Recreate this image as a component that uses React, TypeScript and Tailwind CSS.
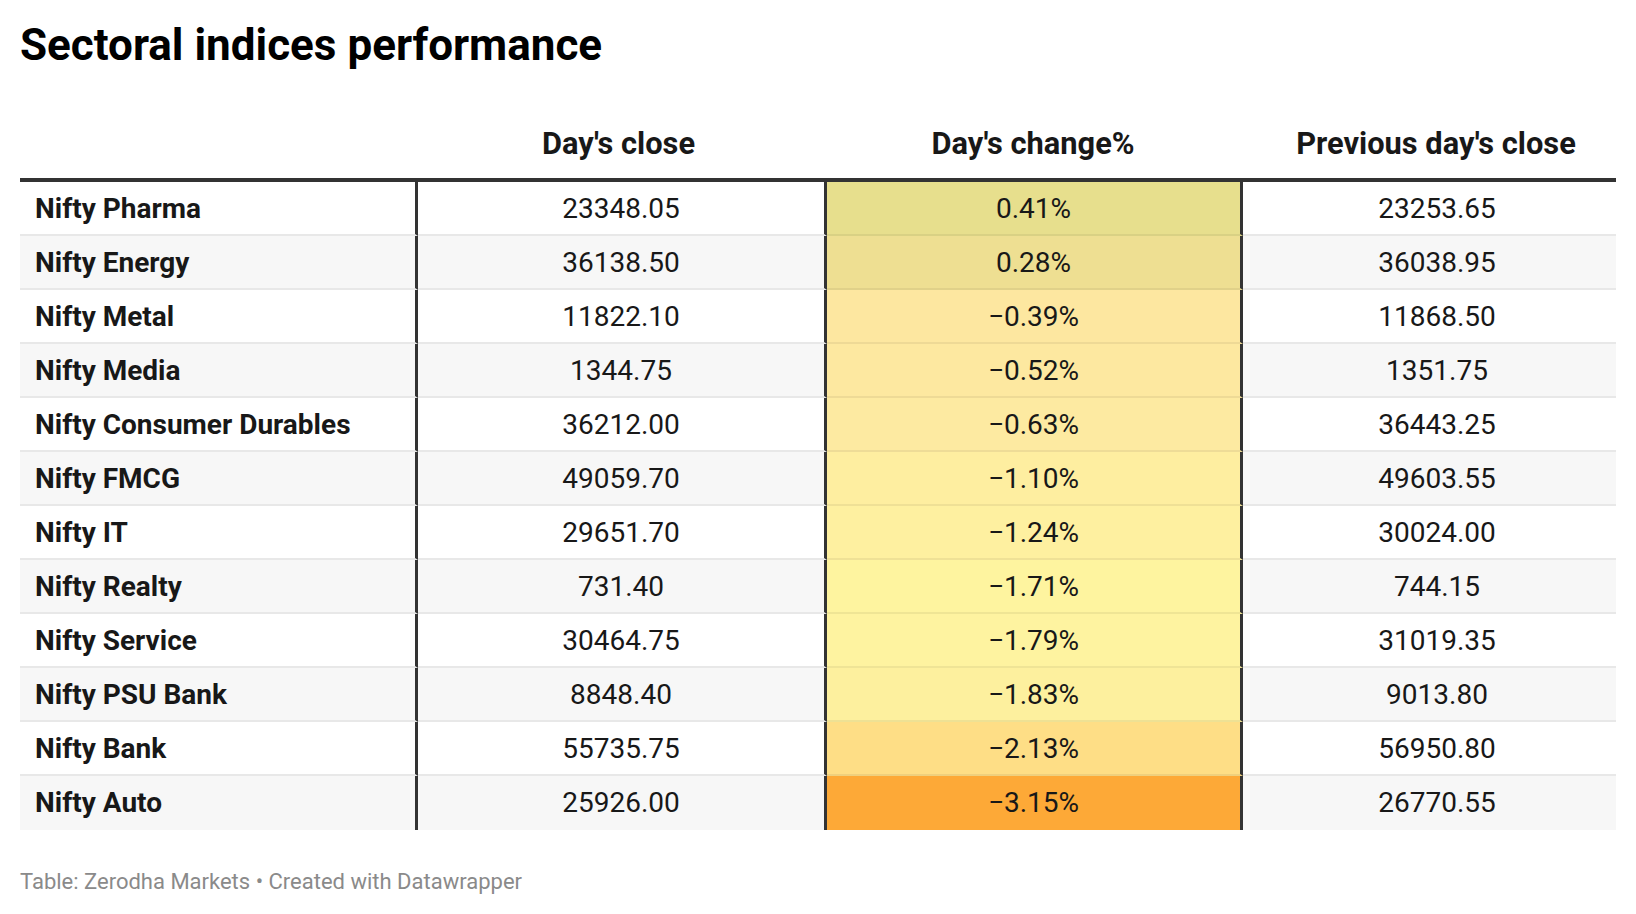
import React from "react";

type Row = { name: string; close: string; change: string; prev: string; color: string };

const rows: Row[] = [
  { name: "Nifty Pharma", close: "23348.05", change: "0.41%", prev: "23253.65", color: "#e7df8d" },
  { name: "Nifty Energy", close: "36138.50", change: "0.28%", prev: "36038.95", color: "#eedf92" },
  { name: "Nifty Metal", close: "11822.10", change: "\u22120.39%", prev: "11868.50", color: "#fde7a0" },
  { name: "Nifty Media", close: "1344.75", change: "\u22120.52%", prev: "1351.75", color: "#fde8a0" },
  { name: "Nifty Consumer Durables", close: "36212.00", change: "\u22120.63%", prev: "36443.25", color: "#fdeaa1" },
  { name: "Nifty FMCG", close: "49059.70", change: "\u22121.10%", prev: "49603.55", color: "#feeea0" },
  { name: "Nifty IT", close: "29651.70", change: "\u22121.24%", prev: "30024.00", color: "#fef0a0" },
  { name: "Nifty Realty", close: "731.40", change: "\u22121.71%", prev: "744.15", color: "#fef49f" },
  { name: "Nifty Service", close: "30464.75", change: "\u22121.79%", prev: "31019.35", color: "#fef3a0" },
  { name: "Nifty PSU Bank", close: "8848.40", change: "\u22121.83%", prev: "9013.80", color: "#fdf09e" },
  { name: "Nifty Bank", close: "55735.75", change: "\u22122.13%", prev: "56950.80", color: "#fede86" },
  { name: "Nifty Auto", close: "25926.00", change: "\u22123.15%", prev: "26770.55", color: "#fda937" },
];

export default function App() {
  return (
    <div className="w-[1636px] h-[914px] bg-white text-[#181818] overflow-hidden" style={{ fontFamily: "Roboto, 'Liberation Sans', sans-serif" }}>
      <div className="pl-[20px] pr-[20px]">
        <div className="pt-[24px] text-[44px] leading-[42px] font-bold text-black">Sectoral indices performance</div>

        <div className="mt-[64px] flex border-b-[4px] border-[#333333] text-[30.8px] leading-[28px] font-bold pb-[20px]">
          <div className="w-[398px] pl-[15px]"></div>
          <div className="w-[409px] pr-[8px] text-center">Day's close</div>
          <div className="w-[416px] pr-[4px] text-center">Day's change%</div>
          <div className="flex-1 pl-[13px] text-center">Previous day's close</div>
        </div>

        <div>
          {rows.map((r, i) => {
            const gray = i % 2 === 1;
            const last = i === rows.length - 1;
            return (
              <div
                key={r.name}
                className={`flex h-[54px] text-[28px] leading-[52px] ${gray ? "bg-[#f7f7f7]" : "bg-white"} ${last ? "h-[52px]" : ""}`}
              >
                <div className={`w-[398px] pl-[15px] pt-[1px] font-bold border-r-[3px] border-r-[#333333] ${last ? "" : "border-b-2 border-b-[#e8e8e8]"}`}>{r.name}</div>
                <div className={`w-[409px] pt-[1px] text-center border-r-[3px] border-r-[#333333] ${last ? "" : "border-b-2 border-b-[#e8e8e8]"}`}>{r.close}</div>
                <div
                  className={`w-[416px] pt-[1px] text-center border-r-[3px] border-r-[#333333] ${last ? "" : "border-b-2 border-b-black/[0.06]"}`}
                  style={{ backgroundColor: r.color }}
                >
                  {r.change}
                </div>
                <div className={`flex-1 pl-[15px] pt-[1px] text-center ${last ? "" : "border-b-2 border-b-[#e8e8e8]"}`}>{r.prev}</div>
              </div>
            );
          })}
        </div>

        <div className="mt-[41px] text-[22px] leading-[22px] text-[#8a8a8a]">Table: Zerodha Markets • Created with Datawrapper</div>
      </div>
    </div>
  );
}
